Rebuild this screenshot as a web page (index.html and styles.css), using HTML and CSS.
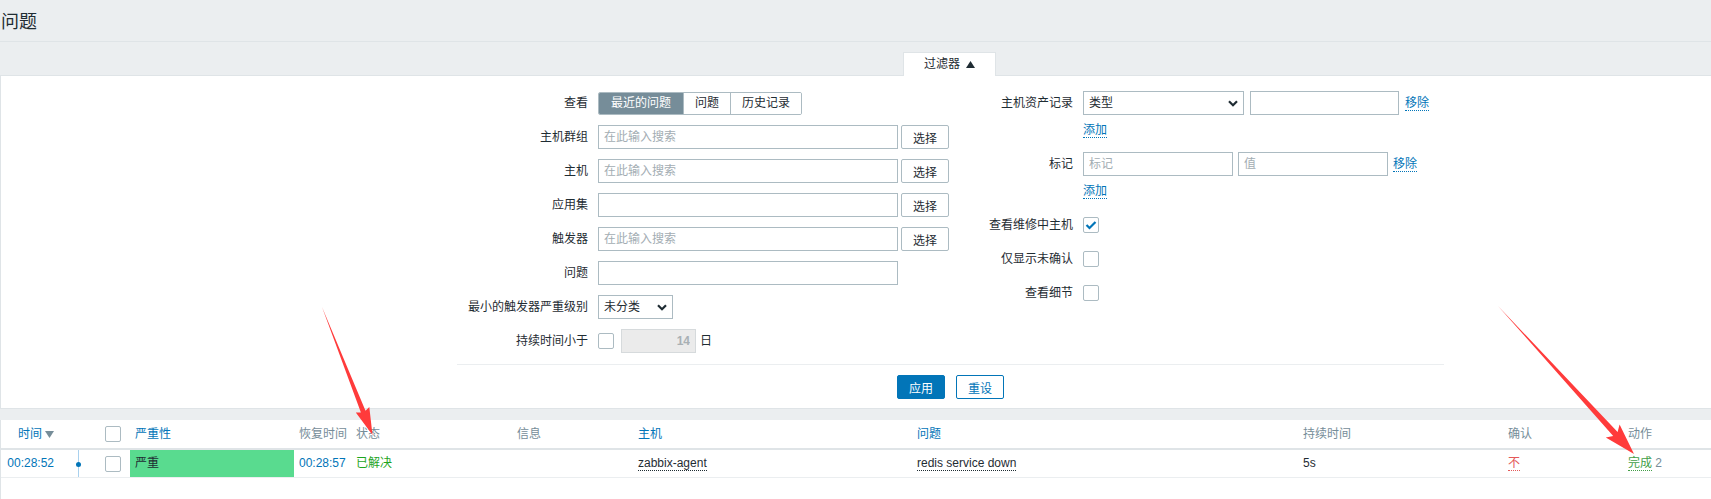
FILE: index.html
```html
<!DOCTYPE html>
<html lang="zh">
<head>
<meta charset="utf-8">
<title>问题</title>
<link rel="stylesheet" href="styles.css">
</head>
<body>
<div class="page-header"><h1 class="title">问题</h1></div>
<div class="tabbar">
  <div class="tab"><span>过滤器</span><svg class="caret" width="9" height="7" viewBox="0 0 9 7"><path d="M0 7 L4.5 0 L9 7Z" fill="#1f2c33"/></svg></div>
</div>
<section class="filter">
  <div class="filter-inner">
    <div class="filter-cols">
      <div class="form-grid left">
        <div class="lbl">查看</div>
        <div class="ctl"><div class="seg"><span class="seg-item on">最近的问题</span><span class="seg-item">问题</span><span class="seg-item">历史记录</span></div></div>

        <div class="lbl">主机群组</div>
        <div class="ctl"><input class="txt w300" placeholder="在此输入搜索"><button class="btn-sel">选择</button></div>

        <div class="lbl">主机</div>
        <div class="ctl"><input class="txt w300" placeholder="在此输入搜索"><button class="btn-sel">选择</button></div>

        <div class="lbl">应用集</div>
        <div class="ctl"><input class="txt w300"><button class="btn-sel">选择</button></div>

        <div class="lbl">触发器</div>
        <div class="ctl"><input class="txt w300" placeholder="在此输入搜索"><button class="btn-sel">选择</button></div>

        <div class="lbl">问题</div>
        <div class="ctl"><input class="txt w300"></div>

        <div class="lbl">最小的触发器严重级别</div>
        <div class="ctl"><div class="select w75"><span>未分类</span><svg class="chev" width="10" height="7" viewBox="0 0 10 7"><path d="M1 1.2 L5 5.2 L9 1.2" fill="none" stroke="#1f2c33" stroke-width="2.2"/></svg></div></div>

        <div class="lbl">持续时间小于</div>
        <div class="ctl"><span class="cb"></span><input class="txt num" value="14" disabled><span class="unit">日</span></div>
      </div>

      <div class="form-grid right">
        <div class="lbl top">主机资产记录</div>
        <div class="stack">
          <div class="ctl"><div class="select w161"><span>类型</span><svg class="chev" width="10" height="7" viewBox="0 0 10 7"><path d="M1 1.2 L5 5.2 L9 1.2" fill="none" stroke="#1f2c33" stroke-width="2.2"/></svg></div><input class="txt w149 gap6"><a class="link gap6">移除</a></div>
          <div class="ctl"><a class="link">添加</a></div>
        </div>

        <div class="lbl top">标记</div>
        <div class="stack">
          <div class="ctl"><input class="txt w150" placeholder="标记"><input class="txt w150 gap5" placeholder="值"><a class="link gap5">移除</a></div>
          <div class="ctl"><a class="link">添加</a></div>
        </div>

        <div class="lbl">查看维修中主机</div>
        <div class="ctl"><span class="cb checked"><svg width="12" height="10" viewBox="0 0 12 10"><path d="M1.5 5 L4.5 8 L10.5 2" fill="none" stroke="#0275b8" stroke-width="2.2"/></svg></span></div>

        <div class="lbl">仅显示未确认</div>
        <div class="ctl"><span class="cb"></span></div>

        <div class="lbl">查看细节</div>
        <div class="ctl"><span class="cb"></span></div>
      </div>
    </div>
    <div class="divider"></div>
    <div class="buttons">
      <button class="btn primary">应用</button>
      <button class="btn alt">重设</button>
    </div>
  </div>
</section>

<section class="problems">
  <table class="list">
    <colgroup>
      <col class="c-time"><col class="c-tl"><col class="c-cb"><col class="c-sev"><col class="c-rec"><col class="c-status"><col class="c-info"><col class="c-host"><col class="c-prob"><col class="c-dur"><col class="c-ack"><col class="c-act">
    </colgroup>
    <thead>
      <tr>
        <th class="right"><span class="blue">时间</span><svg class="sort" width="9" height="7" viewBox="0 0 9 7"><path d="M0 0 L9 0 L4.5 7Z" fill="#768d99"/></svg></th>
        <th></th>
        <th><span class="cb"></span></th>
        <th class="blue">严重性</th>
        <th>恢复时间</th>
        <th>状态</th>
        <th>信息</th>
        <th class="blue">主机</th>
        <th class="blue">问题</th>
        <th>持续时间</th>
        <th>确认</th>
        <th>动作</th>
      </tr>
    </thead>
    <tbody>
      <tr>
        <td class="right"><span class="blue">00:28:52</span></td>
        <td class="tl"><div class="tl-line"><span class="tl-dot"></span></div></td>
        <td><span class="cb"></span></td>
        <td class="sev">严重</td>
        <td><span class="blue">00:28:57</span></td>
        <td class="green">已解决</td>
        <td></td>
        <td><span class="dotted">zabbix-agent</span></td>
        <td><span class="dotted">redis service down</span></td>
        <td>5s</td>
        <td><span class="red dotted">不</span></td>
        <td><span class="green-link dotted">完成</span> <span class="grey">2</span></td>
      </tr>
    </tbody>
  </table>
</section>

<svg class="annot" width="1711" height="499" viewBox="0 0 1711 499">
  <polygon points="322,307 365.5,410.8 369.3,407.0 372.5,435 355.8,412.6 360.9,412.6" fill="#ff3b3b"/>
  <polygon points="1498,306 1617.6,431.9 1619.6,424.6 1634,454 1605.8,437.4 1613.2,435.9" fill="#ff3b3b"/>
</svg>
</body>
</html>
```
FILE: styles.css
```css
* { box-sizing: border-box; }

body {
  margin: 0;
  width: 1711px;
  height: 499px;
  overflow: hidden;
  position: relative;
  background: #ebeef0;
  color: #1f2c33;
  font-family: "Liberation Sans", "Noto Sans CJK SC", sans-serif;
  font-size: 12px;
  line-height: 15px;
}

.page-header {
  height: 42px;
  border-bottom: 1px solid #dfe4e7;
  display: flex;
  align-items: center;
}

.title {
  margin: 0;
  padding: 2px 0 0 1px;
  font-size: 18px;
  font-weight: normal;
  line-height: 24px;
}

.tabbar {
  height: 33px;
  display: flex;
  align-items: flex-end;
  padding-left: 903px;
}

.tab {
  width: 93px;
  height: 24px;
  margin-bottom: -1px;
  position: relative;
  z-index: 1;
  background: #fff;
  border: 1px solid #dfe4e7;
  border-bottom: none;
  display: flex;
  align-items: center;
  justify-content: center;
  gap: 6px;
}

.caret { display: block; margin-top: -1px; }

.filter {
  background: #fff;
  border: 1px solid #dfe4e7;
  border-right: none;
}

.filter-inner {
  margin-left: 456px;
  width: 987px;
  padding: 15px 0 9px;
}

.filter-cols { display: flex; align-items: flex-start; }

.form-grid {
  display: grid;
  column-gap: 10px;
  row-gap: 10px;
  align-items: center;
  align-content: start;
}

.form-grid.left {
  width: 504px;
  grid-template-columns: 131px auto;
  grid-auto-rows: 24px;
}

.form-grid.right {
  width: 483px;
  grid-template-columns: 112px auto;
}

.lbl {
  text-align: right;
  white-space: nowrap;
  line-height: 24px;
}

.lbl.top { align-self: start; }

.stack {
  display: flex;
  flex-direction: column;
  gap: 3px;
}

.ctl {
  display: flex;
  align-items: center;
  height: 24px;
}

.seg {
  display: flex;
  height: 23px;
  border: 1px solid #acbbc2;
  border-radius: 2px;
  overflow: hidden;
}

.seg-item {
  display: flex;
  align-items: center;
  padding: 0 11px;
  border-left: 1px solid #acbbc2;
  background: #fff;
}

.seg-item:first-child { border-left: none; padding: 0 12px; }

.seg-item.on {
  background: #768d99;
  color: #fff;
}

.txt {
  height: 24px;
  border: 1px solid #acbbc2;
  border-radius: 0;
  background: #fff;
  font-family: inherit;
  font-size: 12px;
  color: #1f2c33;
  padding: 0 5px;
  outline: none;
}

.txt::placeholder { color: #a3adb3; }

.w300 { width: 300px; }
.w149 { width: 149px; }
.w150 { width: 150px; }

.gap6 { margin-left: 6px; }
.gap5 { margin-left: 5px; }

.txt.num {
  width: 75px;
  margin-left: 7px;
  background: #ebebeb;
  border-color: #d6dadc;
  text-align: right;
  font-weight: bold;
  color: #a9b0b4;
}

.unit { margin-left: 4px; }

.btn-sel {
  margin-left: 3px;
  width: 48px;
  height: 24px;
  background: #fff;
  border: 1px solid #acbbc2;
  border-radius: 2px;
  font-family: inherit;
  font-size: 12px;
  color: #1f2c33;
  padding: 0;
}

.select {
  height: 24px;
  border: 1px solid #acbbc2;
  background: #fff;
  display: flex;
  align-items: center;
  justify-content: space-between;
  padding: 0 5px 0 5px;
}

.w75 { width: 75px; }
.w161 { width: 161px; }

.chev { display: block; }

.link {
  color: #0275b8;
  border-bottom: 1px dotted #0275b8;
  line-height: 14px;
}

.cb {
  display: inline-flex;
  align-items: center;
  justify-content: center;
  width: 16px;
  height: 16px;
  border: 1px solid #acbbc2;
  border-radius: 2px;
  background: #fff;
  vertical-align: middle;
}

.divider {
  height: 1px;
  margin-top: 11px;
  background: #ebeef0;
}

.buttons {
  display: flex;
  justify-content: center;
  gap: 11px;
  margin-top: 10px;
}

.btn {
  width: 48px;
  height: 24px;
  border-radius: 2px;
  font-family: inherit;
  font-size: 12px;
  padding: 0;
}

.btn.primary {
  background: #0275b8;
  color: #fff;
  border: 1px solid #0275b8;
}

.btn.alt {
  background: #fff;
  color: #0275b8;
  border: 1px solid #0275b8;
}

.problems {
  margin-top: 11px;
  background: #fff;
  border-left: 1px solid #dfe4e7;
  height: 80px;
}

.list {
  width: 1710px;
  table-layout: fixed;
  border-collapse: collapse;
}

.c-time { width: 58px; }
.c-tl { width: 41px; }
.c-cb { width: 30px; }
.c-sev { width: 164px; }
.c-rec { width: 57px; }
.c-status { width: 161px; }
.c-info { width: 121px; }
.c-host { width: 279px; }
.c-prob { width: 386px; }
.c-dur { width: 205px; }
.c-ack { width: 120px; }
.c-act { width: 88px; }

.list th {
  height: 29px;
  padding: 0 5px;
  text-align: left;
  font-weight: normal;
  color: #768d99;
  border-bottom: 2px solid #dfe4e7;
  white-space: nowrap;
}

.list td {
  height: 28px;
  padding: 0 5px;
  border-bottom: 1px solid #ebeef0;
  white-space: nowrap;
}

.list th.right, .list td.right { text-align: right; }

.list th .cb, .list td .cb { display: flex; }

.sort { display: inline-block; margin-left: 3px; vertical-align: 0; }

.blue, .list th.blue { color: #0275b8; }

.list td.sev { background: #59db8f; color: #1f2c33; }

.list td.tl { padding: 0; }

.tl-line {
  position: relative;
  height: 27px;
  margin-left: 19px;
  border-left: 1px solid #a9d1ee;
}

.tl-dot {
  position: absolute;
  left: -3px;
  top: 12px;
  width: 5px;
  height: 5px;
  border-radius: 50%;
  background: #0275b8;
}

.green { color: #1ea51e; }

.dotted { border-bottom: 1px dotted currentColor; }

.red { color: #e45959; }

.green-link { color: #429e47; }

.grey { color: #768d99; }

.annot {
  position: absolute;
  left: 0;
  top: 0;
  pointer-events: none;
}
```
